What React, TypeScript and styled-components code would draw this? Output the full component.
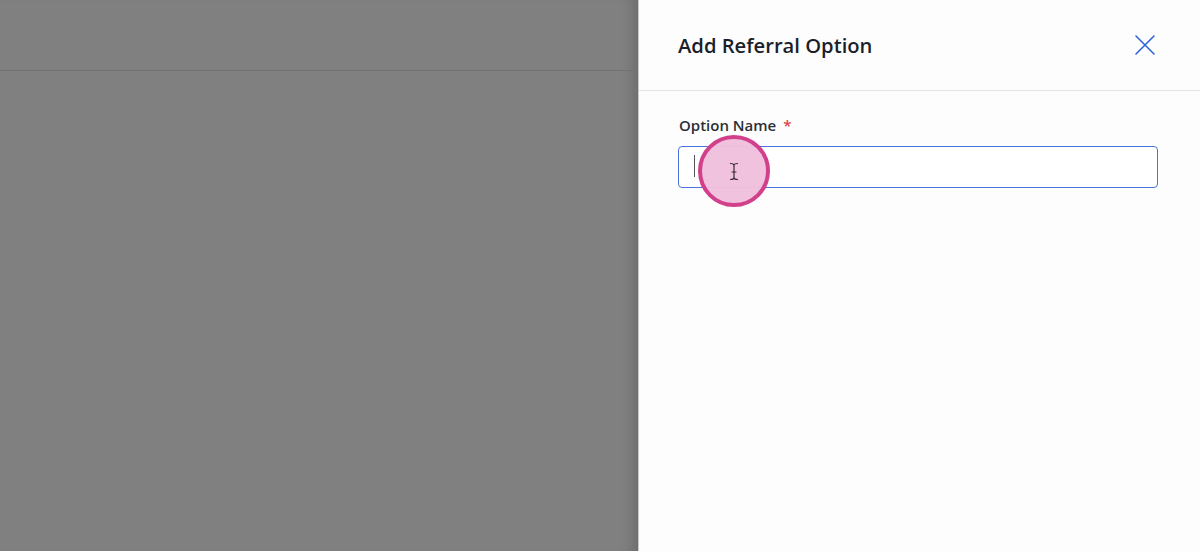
import React from 'react';
import styled, { createGlobalStyle } from 'styled-components';

const GlobalStyle = createGlobalStyle`
  html, body {
    margin: 0;
    padding: 0;
    height: 100%;
    overflow: hidden;
  }
  body {
    font-family: 'Open Sans', 'Noto Sans', sans-serif;
    background: #808080;
  }
  #root {
    height: 100%;
  }
`;

const App = () => {
  return (
    <>
      <GlobalStyle />
      <Page>
        <Backdrop>
          <BackdropBar />
        </Backdrop>
        <Drawer>
          <DrawerHeader>
            <DrawerTitle>Add Referral Option</DrawerTitle>
            <CloseButton aria-label='Close'>
              <svg width='22' height='22' viewBox='0 0 22 22' fill='none'>
                <path d='M2 2L20 20M20 2L2 20' stroke='#2f64d8' strokeWidth='1.6' strokeLinecap='round' />
              </svg>
            </CloseButton>
          </DrawerHeader>
          <DrawerBody>
            <Field>
              <Label>
                Option Name<Required>*</Required>
              </Label>
              <InputWrap>
                <Input />
                <Caret />
                <CursorHighlight>
                  <svg width='10' height='19' viewBox='0 0 10 19' fill='none'>
                    <path d='M1.5 1.5C3.5 1.5 5 2 5 3.5V15.5C5 17 3.5 17.5 1.5 17.5M8.5 1.5C6.5 1.5 5 2 5 3.5M5 15.5C5 17 6.5 17.5 8.5 17.5M3 10H7' stroke='#3a2a33' strokeWidth='1.2' strokeLinecap='round' />
                  </svg>
                </CursorHighlight>
              </InputWrap>
            </Field>
          </DrawerBody>
        </Drawer>
      </Page>
    </>
  );
};

const Page = styled.div`
  display: flex;
  height: 100%;
`;

const Backdrop = styled.div`
  flex: 1;
  background: #808080;
  box-shadow: inset -14px 0 14px -10px rgba(0, 0, 0, 0.18);
`;

const BackdropBar = styled.div`
  height: 70px;
  border-bottom: 1px solid #727272;
`;

const Drawer = styled.div`
  width: 562px;
  box-sizing: border-box;
  background: #fdfdfd;
  display: flex;
  flex-direction: column;
  border-left: 1px solid #c9c9c9;
`;

const DrawerHeader = styled.div`
  height: 91px;
  box-sizing: border-box;
  display: flex;
  align-items: center;
  justify-content: space-between;
  padding: 0 44px 1px 39px;
  border-bottom: 1px solid #e3e5ea;
`;

const DrawerTitle = styled.h2`
  margin: 0;
  font-size: 20.2px;
  font-weight: 600;
  color: #1b1f2a;
`;

const CloseButton = styled.button`
  background: none;
  border: none;
  padding: 0;
  display: flex;
  cursor: pointer;
`;

const DrawerBody = styled.div`
  padding: 24px 42px 0 39px;
`;

const Field = styled.div`
  display: flex;
  flex-direction: column;
  gap: 11px;
`;

const Label = styled.label`
  font-size: 15px;
  font-weight: 600;
  color: #2a2e38;
  padding-left: 1px;
`;

const Required = styled.span`
  color: #e0443e;
  margin-left: 7px;
`;

const InputWrap = styled.div`
  position: relative;
`;

const Input = styled.input`
  box-sizing: border-box;
  width: 100%;
  height: 42px;
  border: 1px solid #4a74dc;
  border-radius: 4px;
  background: #fff;
  outline: none;
  font-family: inherit;
  font-size: 14px;
  padding: 0 16px;
`;

const Caret = styled.span`
  position: absolute;
  left: 16px;
  top: 9px;
  width: 1px;
  height: 22px;
  background: #555;
`;

const CursorHighlight = styled.div`
  position: absolute;
  left: 20px;
  top: -11px;
  width: 72px;
  height: 72px;
  box-sizing: border-box;
  border-radius: 50%;
  border: 4px solid #d2408b;
  background: rgba(240, 192, 220, 0.97);
  display: flex;
  align-items: center;
  justify-content: center;
  padding-top: 1px;
`;

export default App;
